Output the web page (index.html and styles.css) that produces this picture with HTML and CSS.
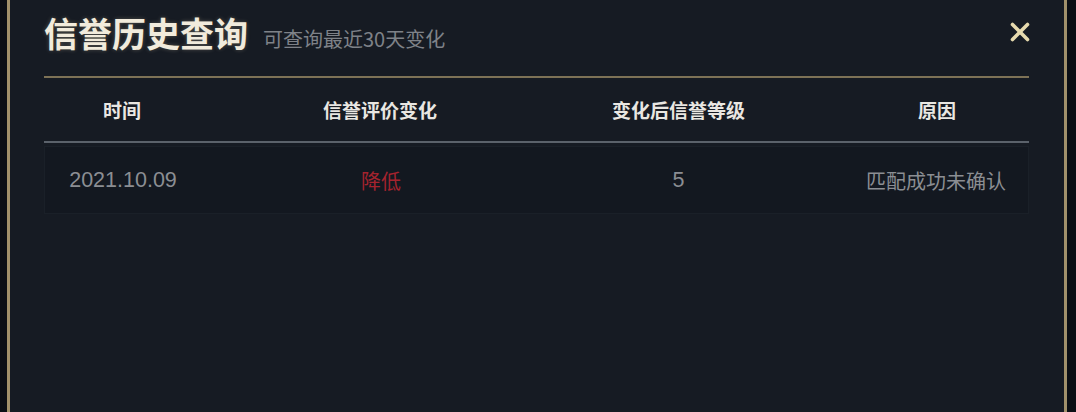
FILE: index.html
```html
<!DOCTYPE html>
<html lang="zh-CN">
<head>
    <meta charset="UTF-8">
    <meta name="viewport" content="width=device-width, initial-scale=1.0">
    <title>信誉历史查询</title>
    <link rel="stylesheet" href="styles.css">
</head>
<body>
    <div class="frame">
        <header class="dialog-header">
            <div class="heading">
                <h1>信誉历史查询</h1>
                <span class="subtitle">可查询最近30天变化</span>
            </div>
            <button class="close-btn" aria-label="关闭">
                <svg width="24" height="24" viewBox="0 0 24 24">
                    <path d="M4.5 4.5 L19.5 19.5 M19.5 4.5 L4.5 19.5" stroke="#e6daae" stroke-width="3.6" stroke-linecap="round"/>
                </svg>
            </button>
        </header>

        <div class="history-table">
            <div class="table-row table-head">
                <div class="cell col-time">时间</div>
                <div class="cell col-change">信誉评价变化</div>
                <div class="cell col-level">变化后信誉等级</div>
                <div class="cell col-reason">原因</div>
            </div>
            <div class="table-row table-data">
                <div class="cell col-time num">2021.10.09</div>
                <div class="cell col-change down">降低</div>
                <div class="cell col-level num">5</div>
                <div class="cell col-reason">匹配成功未确认</div>
            </div>
        </div>
    </div>
</body>
</html>
```

FILE: styles.css
```css
* {
    box-sizing: border-box;
}

body {
    margin: 0;
    height: 412px;
    overflow: hidden;
    background-color: #0b0f15;
    font-family: "Liberation Sans", "Noto Sans CJK SC", sans-serif;
}

.frame {
    margin: 0 9px 0 7px;
    height: 412px;
    padding: 0 35px 0 34px;
    background-color: #161b23;
    border-left: 3px solid #a1916b;
    border-right: 3px solid #a1916b;
}

.dialog-header {
    display: flex;
    align-items: center;
    justify-content: space-between;
    height: 78px;
    padding-bottom: 12px;
    border-bottom: 2px solid #7d7256;
}

.heading {
    display: flex;
    align-items: baseline;
    gap: 15px;
}

h1 {
    margin: 0;
    font-family: "Noto Sans CJK SC", sans-serif;
    font-size: 34px;
    font-weight: 700;
    color: #f1ebdc;
    text-shadow: 0 0 4px rgba(255, 240, 200, 0.25);
}

.subtitle {
    font-family: "Noto Sans CJK SC", sans-serif;
    font-size: 20px;
    color: #7e8288;
}

.close-btn {
    margin-right: -3px;
    padding: 0;
    background: none;
    border: none;
    cursor: pointer;
    line-height: 0;
}

.table-row {
    display: grid;
    grid-template-columns: 156px 360px 1fr 184px;
    align-items: center;
}

.cell {
    text-align: center;
}

.col-level {
    padding-right: 48px;
}

.table-head {
    height: 65px;
    border-bottom: 2px solid #5b626b;
    font-family: "Noto Sans CJK SC", sans-serif;
    font-size: 19px;
    font-weight: 700;
    color: #e9e7e2;
}

.table-data {
    height: 68px;
    margin-top: 3px;
    background-color: #131820;
    border: 1px solid #1a2028;
    font-size: 20px;
    color: #8b8e93;
}

.num {
    font-size: 21.5px;
}

.down {
    color: #a5232e;
}
```
